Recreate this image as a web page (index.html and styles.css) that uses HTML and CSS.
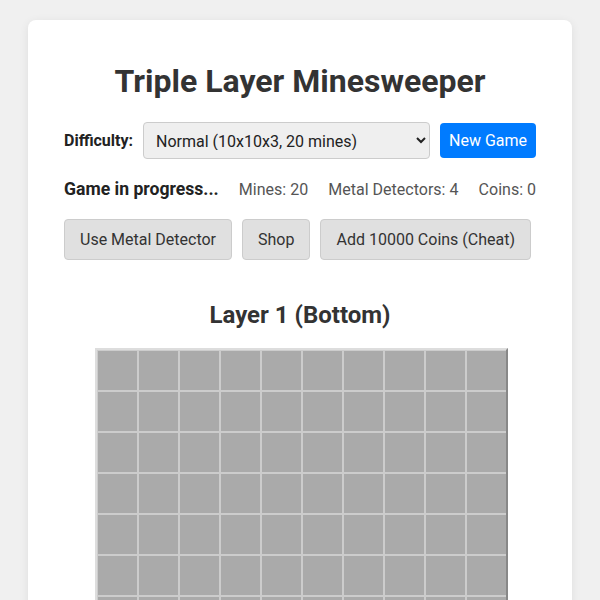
FILE: index.html
```html
<!DOCTYPE html>
<html lang="en">
<head>
<meta charset="utf-8">
<title>Triple Layer Minesweeper</title>
<link rel="stylesheet" href="styles.css">
</head>
<body>
<div class="card">
  <h1 class="title">Triple Layer Minesweeper</h1>
  <div class="controls">
    <label class="label" for="difficulty">Difficulty:</label>
    <select id="difficulty" class="select">
      <option>Easy (8x8x3, 12 mines)</option>
      <option selected>Normal (10x10x3, 20 mines)</option>
      <option>Hard (12x12x3, 35 mines)</option>
    </select>
    <button class="btn-primary">New Game</button>
  </div>
  <div class="status">
    <span class="status-main">Game in progress...</span>
    <span class="stat">Mines: 20</span>
    <span class="stat">Metal Detectors: 4</span>
    <span class="stat">Coins: 0</span>
  </div>
  <div class="actions">
    <button class="btn">Use Metal Detector</button>
    <button class="btn">Shop</button>
    <button class="btn">Add 10000 Coins (Cheat)</button>
  </div>
  <div class="layer">
    <h2 class="layer-title">Layer 1 (Bottom)</h2>
    <div class="board" id="board"></div>
  </div>
</div>
<script src="script.js"></script>
</body>
</html>
```
FILE: styles.css
```css
html, body {
  margin: 0;
  padding: 0;
}
body {
  background: #f0f0f0;
  font-family: Roboto, "Liberation Sans", Arial, sans-serif;
  color: #333;
  padding: 20px 28px;
}
.card {
  background: #fff;
  border-radius: 8px;
  box-shadow: 0 2px 10px rgba(0, 0, 0, 0.08);
  padding: 30px 36px 40px;
}
.title {
  font-size: 32px;
  font-weight: 700;
  text-align: center;
  margin: 12px 0 22px;
  color: #333;
}
.controls {
  display: flex;
  align-items: center;
  gap: 10px;
}
.label {
  font-size: 16px;
  font-weight: 700;
  color: #222;
}
.select {
  flex: 1;
  font-family: inherit;
  font-size: 16px;
  padding: 8px;
  height: 37px;
  border: 1px solid #ccc;
  border-radius: 4px;
  background: #efefef;
  color: #222;
}
.btn-primary {
  font-family: inherit;
  font-size: 16px;
  padding: 8px 9px;
  border: none;
  border-radius: 4px;
  background: #007bff;
  color: #fff;
}
.status {
  display: flex;
  align-items: center;
  justify-content: space-between;
  margin-top: 20px;
  font-size: 16px;
}
.status-main {
  font-weight: 700;
  font-size: 17.6px;
  color: #222;
}
.stat {
  color: #555;
}
.actions {
  display: flex;
  gap: 10px;
  margin-top: 20px;
}
.btn {
  font-family: inherit;
  font-size: 16px;
  padding: 10px 15px;
  border: 1px solid #ccc;
  border-radius: 4px;
  background: #e0e0e0;
  color: #333;
}
.layer {
  display: flex;
  flex-direction: column;
  align-items: center;
  margin-top: 41px;
}
.layer-title {
  font-size: 24px;
  font-weight: 700;
  margin: 0 0 19px;
  color: #333;
}
.board {
  display: grid;
  grid-template-columns: repeat(10, 39px);
  grid-auto-rows: 39px;
  gap: 2px;
  padding: 1px 0 0 1px;
  background: #ccc;
  border: 2px solid;
  border-color: #ddd #888 #888 #ddd;
  margin-left: 3px;
}
.cell {
  background: #aaa;
}
```
FILE: script.js
```js
var board = document.getElementById('board');
for (var i = 0; i < 100; i++) {
  var c = document.createElement('div');
  c.className = 'cell';
  board.appendChild(c);
}
```
